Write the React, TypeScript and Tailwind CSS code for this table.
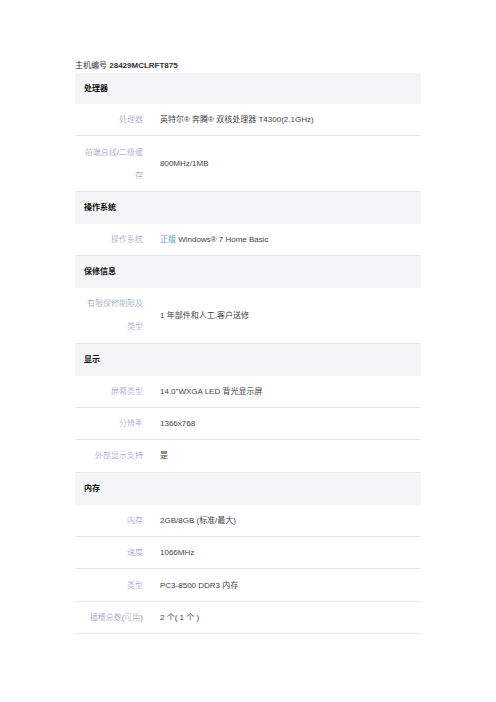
import React from 'react';

type Row = { label: string; value: React.ReactNode };
type Section = { title: string; rows: Row[] };

const sections: Section[] = [
  {
    title: '处理器',
    rows: [
      { label: '处理器', value: '英特尔® 奔腾® 双核处理器 T4300(2.1GHz)' },
      { label: '前端总线/二级缓存', value: '800MHz/1MB' },
    ],
  },
  {
    title: '操作系统',
    rows: [
      {
        label: '操作系统',
        value: (
          <>
            <span className="text-[#4a9be0]">正版</span> Windows® 7 Home Basic
          </>
        ),
      },
    ],
  },
  {
    title: '保修信息',
    rows: [{ label: '有限保修期限及类型', value: '1 年部件和人工,客户送修' }],
  },
  {
    title: '显示',
    rows: [
      { label: '屏幕类型', value: '14.0"WXGA LED 背光显示屏' },
      { label: '分辨率', value: '1366x768' },
      { label: '外部显示支持', value: '是' },
    ],
  },
  {
    title: '内存',
    rows: [
      { label: '内存', value: '2GB/8GB (标准/最大)' },
      { label: '速度', value: '1066MHz' },
      { label: '类型', value: 'PC3-8500 DDR3 内存' },
      { label: '插槽总数(可用)', value: '2 个( 1 个 )' },
    ],
  },
];

const font = { fontFamily: '"Liberation Sans", "Noto Sans CJK SC", sans-serif' };

export default function App() {
  return (
    <div className="min-h-[702px] w-[496px] bg-white pl-[75px] pt-[59px]" style={font}>
      <div className="text-[8px] leading-[14px] text-[#333]">
        <span>主机编号 </span>
        <span className="font-bold">28429MCLRFT875</span>
      </div>

      <div className="w-[346px]">
        {sections.map((section, i) => (
          <div key={section.title}>
            {/* section header */}
            <div
              className={`flex items-center bg-[#f4f5f6] pl-[9px] text-[8px] font-bold text-[#111] ${
                i === 0 ? 'h-[31px]' : 'h-[32px]'
              }`}
            >
              {section.title}
            </div>
            {section.rows.map((row) => (
              <div
                key={row.label}
                className="flex items-center border-b border-[#e6e7e9] py-[4.2px] text-[8px] leading-[23px]"
              >
                <div className="w-[76px] shrink-0 pl-[6px] pr-[8px] text-right font-light text-[#8595ad]">
                  {row.label}
                </div>
                <div className="whitespace-pre pl-[9px] text-[#444]">{row.value}</div>
              </div>
            ))}
          </div>
        ))}
      </div>
    </div>
  );
}
